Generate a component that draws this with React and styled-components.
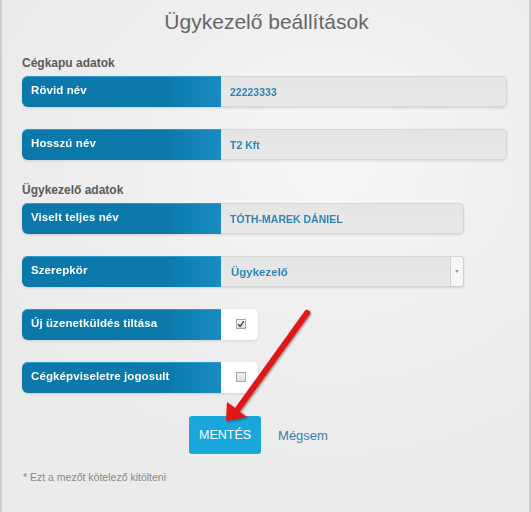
import React from "react";
import styled, { createGlobalStyle } from "styled-components";

const GlobalStyle = createGlobalStyle`
  html, body {
    margin: 0;
    padding: 0;
    background: #ececec;
  }
  * {
    box-sizing: border-box;
  }
`;

const sections = [
  {
    title: "Cégkapu adatok",
    rows: [
      { label: "Rövid név", type: "text", value: "22223333", width: 287 },
      { label: "Hosszú név", type: "text", value: "T2 Kft", width: 287 },
    ],
  },
  {
    title: "Ügykezelő adatok",
    rows: [
      { label: "Viselt teljes név", type: "text", value: "TÓTH-MAREK DÁNIEL", width: 243 },
      { label: "Szerepkör", type: "select", value: "Ügykezelő", width: 243 },
      { label: "Új üzenetküldés tiltása", type: "check", checked: true },
      { label: "Cégképviseletre jogosult", type: "check", checked: false },
    ],
  },
];

function App() {
  return (
    <>
      <GlobalStyle />
      <Frame>
        <Title>Ügykezelő beállítások</Title>
        {sections.map((section) => (
          <Section key={section.title}>
            <SectionTitle>{section.title}</SectionTitle>
            {section.rows.map((row) => (
              <Row key={row.label}>
                <Label>{row.label}</Label>
                {row.type === "text" && (
                  <Field $width={row.width}>{row.value}</Field>
                )}
                {row.type === "select" && (
                  <Field $width={row.width} $select>
                    <SelectValue>{row.value}</SelectValue>
                    <SelectButton>
                      <Caret />
                    </SelectButton>
                  </Field>
                )}
                {row.type === "check" && (
                  <CheckCell>
                    <CheckBox>
                      {row.checked && (
                        <svg width="8" height="8" viewBox="0 0 8 8">
                          <path
                            d="M1.2 4.2 L3.2 6.4 L6.9 1"
                            fill="none"
                            stroke="#2f3a57"
                            strokeWidth="1.3"
                          />
                        </svg>
                      )}
                    </CheckBox>
                  </CheckCell>
                )}
              </Row>
            ))}
          </Section>
        ))}
        <Actions>
          <SaveButton>MENTÉS</SaveButton>
          <CancelLink>Mégsem</CancelLink>
        </Actions>
        <Footnote>* Ezt a mezőt kötelező kitölteni</Footnote>
        <Arrow width="531" height="512" viewBox="0 0 531 512">
          <defs>
            <filter id="shadow" x="-20%" y="-20%" width="140%" height="140%">
              <feDropShadow dx="1" dy="1" stdDeviation="1.2" floodColor="#000" floodOpacity="0.45" />
            </filter>
          </defs>
          <g filter="url(#shadow)">
            <line
              x1="307"
              y1="313"
              x2="238"
              y2="409"
              stroke="#e11717"
              strokeWidth="6"
              strokeLinecap="round"
            />
            <polygon points="226,421 227,402 247,417" fill="#e11717" />
          </g>
        </Arrow>
      </Frame>
    </>
  );
}

const Frame = styled.div`
  position: relative;
  width: 531px;
  height: 512px;
  padding: 8px 22px 0 22px;
  border-left: 2px solid #cdcdcd;
  border-right: 2px solid #cdcdcd;
  background: radial-gradient(
    ellipse 360px 300px at 62% 32%,
    #f8f8f8 0%,
    #efefef 55%,
    #ebebeb 100%
  );
  font-family: "Liberation Sans", Arial, sans-serif;
  overflow: hidden;
`;

const Title = styled.h1`
  margin: 0 0 19px 0;
  font-size: 21px;
  line-height: 28px;
  font-weight: normal;
  text-align: center;
  color: #666;
  padding-left: 2px;
`;

const Section = styled.div`
  display: flex;
  flex-direction: column;
  margin-left: -2px;
`;

const SectionTitle = styled.div`
  font-size: 12px;
  font-weight: bold;
  line-height: 16px;
  color: #5a5a5a;
  margin-bottom: 5px;
`;

const Row = styled.div`
  display: flex;
  height: 31px;
  margin-bottom: 22px;
  filter: drop-shadow(0 1px 1px rgba(0, 0, 0, 0.12));
`;

const Label = styled.div`
  width: 199px;
  flex-shrink: 0;
  display: flex;
  align-items: center;
  padding: 0 9px 3px 9px;
  border-radius: 6px 0 0 6px;
  background: linear-gradient(to right, #0b78a9 0%, #0b79aa 72%, #1a8bc2 100%);
  box-shadow: inset 0 1px 0 #2b9bd2;
  color: #fff;
  font-size: 11.5px;
  font-weight: bold;
  letter-spacing: 0.1px;
`;

const Field = styled.div`
  width: ${(p) => p.$width}px;
  display: flex;
  align-items: center;
  padding-left: ${(p) => (p.$select ? 0 : 9)}px;
  background: linear-gradient(to bottom, #e5e5e5, #e9e9e9);
  border: 1px solid #d6d6d6;
  border-left: none;
  border-radius: 0 5px 5px 0;
  color: #2c85b6;
  font-size: 10.5px;
  font-weight: bold;
`;

const SelectValue = styled.div`
  flex: 1;
  padding-left: 10px;
  font-size: 11.5px;
`;

const SelectButton = styled.div`
  width: 14px;
  align-self: stretch;
  margin: -1px -1px -1px 0;
  display: flex;
  align-items: center;
  justify-content: center;
  background: #f6f6f6;
  border: 1px solid #cfcfcf;
  border-radius: 0 3px 3px 0;
`;

const Caret = styled.div`
  width: 0;
  height: 0;
  border-left: 2.5px solid transparent;
  border-right: 2.5px solid transparent;
  border-top: 3px solid #9a9a9a;
`;

const CheckCell = styled.div`
  width: 37px;
  display: flex;
  align-items: center;
  justify-content: center;
  padding: 0 0 1px 2px;
  background: #fff;
  border-radius: 0 5px 5px 0;
`;

const CheckBox = styled.div`
  width: 10px;
  height: 10px;
  display: flex;
  align-items: center;
  justify-content: center;
  border: 1px solid #a9a9a9;
  background: linear-gradient(to bottom, #f4f4f4, #dcdcdc);
`;

const Actions = styled.div`
  display: flex;
  align-items: center;
  justify-content: center;
  gap: 17px;
  margin-top: 1px;
  padding-right: 14px;
`;

const SaveButton = styled.button`
  width: 72px;
  height: 38px;
  padding: 0;
  border: none;
  border-radius: 3px;
  background: #19a7dc;
  color: #fff;
  font-family: "Liberation Sans", Arial, sans-serif;
  font-size: 12.5px;
  cursor: pointer;
`;

const CancelLink = styled.a`
  color: #3a80b0;
  font-size: 13px;
  cursor: pointer;
`;

const Footnote = styled.div`
  margin-top: 17px;
  font-size: 10.5px;
  line-height: 12px;
  color: #888;
  margin-left: -1px;
`;

const Arrow = styled.svg`
  position: absolute;
  left: -2px;
  top: 0;
  pointer-events: none;
`;

export default App;
